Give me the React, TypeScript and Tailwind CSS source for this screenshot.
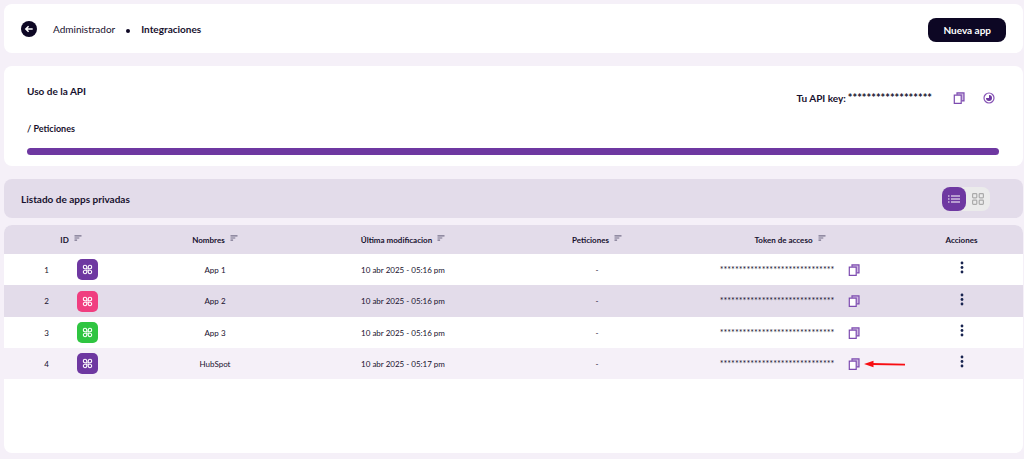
import { useState } from "react"

interface PrivateApp {
  id: number
  name: string
  updatedAt: string
  color: string
  row: string
  highlighted?: boolean
}

const apps: PrivateApp[] = [
  { id: 1, name: "App 1", updatedAt: "10 abr 2025 - 05:16 pm", color: "bg-[#6e38a1]", row: "h-[31px] bg-white" },
  { id: 2, name: "App 2", updatedAt: "10 abr 2025 - 05:16 pm", color: "bg-[#f03e80]", row: "h-8 bg-[#e3dcea]" },
  { id: 3, name: "App 3", updatedAt: "10 abr 2025 - 05:16 pm", color: "bg-[#2fc541]", row: "h-[31px] bg-white" },
  { id: 4, name: "HubSpot", updatedAt: "10 abr 2025 - 05:17 pm", color: "bg-[#6e38a1]", row: "h-[31px] bg-[#f5f0f8]", highlighted: true },
]

const columns = [
  { label: "ID", width: "w-[134px]", sortable: true },
  { label: "Nombres", width: "w-[154px]", sortable: true },
  { label: "Última modificacion", width: "w-[222px]", sortable: true },
  { label: "Peticiones", width: "w-[166px]", sortable: true },
  { label: "Token de acceso", width: "w-[220px]", sortable: true },
  { label: "Acciones", width: "w-[123px]", sortable: false },
]

function CopyIcon({ className }: { className?: string }) {
  return (
    <svg viewBox="0 0 12 12" className={className} fill="none" stroke="#7d4bb0" strokeWidth="1.2">
      <path d="M4 2.8V.9h7v8H8.6" fill="#cdb8e0" />
      <path d="M1.3 3.1h6.9v8.2H1.3z" fill="#fff" />
    </svg>
  )
}

function EyeIcon() {
  return (
    <svg viewBox="0 0 12 12" className="size-3" fill="none">
      <circle cx="6" cy="6" r="5" stroke="#8754b5" strokeWidth="1.2" />
      <path d="M6 3v3H3a3 3 0 1 0 3-3z" fill="#6e38a1" />
    </svg>
  )
}

function SortIcon() {
  return (
    <svg viewBox="0 0 8 6" className="mb-1 h-[6px] w-2" stroke="#77708a" strokeWidth="1.2">
      <path d="M.5 .8h7M.5 3h4.8M.5 5.2h2.6" />
    </svg>
  )
}

function CommandIcon() {
  return (
    <svg viewBox="0 0 12 12" className="size-[11px]" fill="none" stroke="#fff" strokeWidth="1.2">
      <path d="M5.2 5.2H3.1a1.9 1.9 0 1 1 2.1-2.1zM6.8 5.2V3.1a1.9 1.9 0 1 1 2.1 2.1zM5.2 6.8v2.1a1.9 1.9 0 1 1-2.1-2.1zM6.8 6.8h2.1a1.9 1.9 0 1 1-2.1 2.1z" />
    </svg>
  )
}

function Header() {
  return (
    <header className="flex h-[49px] items-center justify-between rounded-lg bg-white px-[17px]">
      <nav className="flex items-center text-[10px] leading-4">
        <button type="button" aria-label="Volver" className="mr-4">
          <svg viewBox="0 0 16 16" className="size-4">
            <circle cx="8" cy="8" r="8" fill="#0d0724" />
            <path d="M11.7 8H5M7.6 5.2 4.8 8l2.8 2.8" fill="none" stroke="#fff" strokeWidth="1.5" />
          </svg>
        </button>
        <a href="#administrador">Administrador</a>
        <span className="mx-[11px] mt-1 size-1 rounded-full bg-[#0d0724]" />
        <span className="font-bold">Integraciones</span>
      </nav>
      <button type="button" className="mt-[3px] h-6 rounded-lg bg-[#0d0724] px-[15px] text-[10px] font-bold text-white">
        Nueva app
      </button>
    </header>
  )
}

function ApiUsage() {
  return (
    <section className="mt-[13px] rounded-lg bg-white pt-[17px] pr-6 pb-[11px] pl-[23px]">
      <div className="flex items-start justify-between text-[10px] leading-4 font-bold">
        <h2>Uso de la API</h2>
        <div className="mt-[7px] flex items-center pr-1">
          <span>Tu API key:</span>
          <span className="ml-[2px] text-[11px] leading-4">******************</span>
          <button type="button" aria-label="Copiar API key" className="ml-[21px]">
            <CopyIcon className="size-3" />
          </button>
          <button type="button" aria-label="Mostrar API key" className="ml-[18px]">
            <EyeIcon />
          </button>
        </div>
      </div>
      <p className="mt-[15px] text-[9px] leading-4 font-bold">/ Peticiones</p>
      <div className="mt-[11px] h-[7px] rounded-full bg-[#6e38a1]" />
    </section>
  )
}

function ListHeader() {
  const [view, setView] = useState("list")

  return (
    <section className="mt-[13px] flex h-[39px] items-center justify-between rounded-lg bg-[#e3dcea] pr-[33px] pl-[17px]">
      <h2 className="text-[10px] leading-4 font-bold">Listado de apps privadas</h2>
      <div className="flex rounded-lg bg-[#ebebeb]">
        <button
          type="button"
          aria-label="Vista de lista"
          aria-pressed={view === "list"}
          onClick={() => setView("list")}
          className="flex size-6 items-center justify-center rounded-lg bg-[#6e38a1]"
        >
          <svg viewBox="0 0 12 8" className="h-2 w-3" stroke="#fff" strokeWidth="1.2">
            <path d="M0 1h1.5M3 1h9M0 4h1.5M3 4h9M0 7h1.5M3 7h9" />
          </svg>
        </button>
        <button
          type="button"
          aria-label="Vista de cuadrícula"
          aria-pressed={view === "grid"}
          onClick={() => setView("grid")}
          className="flex size-6 items-center justify-center"
        >
          <svg viewBox="0 0 12 12" className="size-3" fill="none" stroke="#aaa" strokeWidth="1.2">
            <rect x=".6" y=".6" width="4.2" height="4.2" rx=".8" />
            <rect x="7.2" y=".6" width="4.2" height="4.2" rx=".8" />
            <rect x=".6" y="7.2" width="4.2" height="4.2" rx=".8" />
            <rect x="7.2" y="7.2" width="4.2" height="4.2" rx=".8" />
          </svg>
        </button>
      </div>
    </section>
  )
}

function AppRow({ app }: { app: PrivateApp }) {
  return (
    <tr className={app.row}>
      <td>
        <div className="flex items-center justify-center gap-7">
          <span>{app.id}</span>
          <span className={`flex size-[21px] items-center justify-center rounded-[5px] ${app.color}`}>
            <CommandIcon />
          </span>
        </div>
      </td>
      <td>{app.name}</td>
      <td>{app.updatedAt}</td>
      <td>-</td>
      <td>
        <div className="flex items-center justify-center gap-[14px]">
          <span className="text-[9px] leading-3">******************************</span>
          <div className="relative">
            <button type="button" aria-label={`Copiar token de ${app.name}`} className="block">
              <CopyIcon className="size-3" />
            </button>
            {app.highlighted && (
              <svg viewBox="0 0 42 8" className="absolute top-0.5 left-4 h-2 w-[42px]">
                <path d="M8 4 41 4.6" stroke="#f80d12" strokeWidth="1.8" />
                <path d="M0 4 9.5 .8v6.4z" fill="#f80d12" />
              </svg>
            )}
          </div>
        </div>
      </td>
      <td>
        <button type="button" aria-label={`Acciones de ${app.name}`} className="mx-auto block pb-1">
          <svg viewBox="0 0 4 13" className="h-[13px] w-1" fill="#17234f">
            <circle cx="2" cy="2" r="1.4" />
            <circle cx="2" cy="6.5" r="1.4" />
            <circle cx="2" cy="11" r="1.4" />
          </svg>
        </button>
      </td>
    </tr>
  )
}

export default function App() {
  return (
    <div className="min-h-screen bg-[#f5f0f8] pt-1 pr-px pb-[6px] pl-1 font-['Lato','Liberation_Sans',sans-serif] text-[#17112e]">
      <Header />
      <ApiUsage />
      <ListHeader />
      <main className="mt-[7px] overflow-hidden rounded-lg bg-white pb-[74px]">
        <table className="w-full table-fixed text-center text-[8px] leading-3">
          <thead>
            <tr className="h-[29px] bg-[#e3dcea]">
              {columns.map((column) => (
                <th key={column.label} className={column.width}>
                  <div className="flex items-center justify-center gap-[5px]">
                    {column.label}
                    {column.sortable && <SortIcon />}
                  </div>
                </th>
              ))}
            </tr>
          </thead>
          <tbody>
            {apps.map((app) => (
              <AppRow key={app.id} app={app} />
            ))}
          </tbody>
        </table>
      </main>
    </div>
  )
}
